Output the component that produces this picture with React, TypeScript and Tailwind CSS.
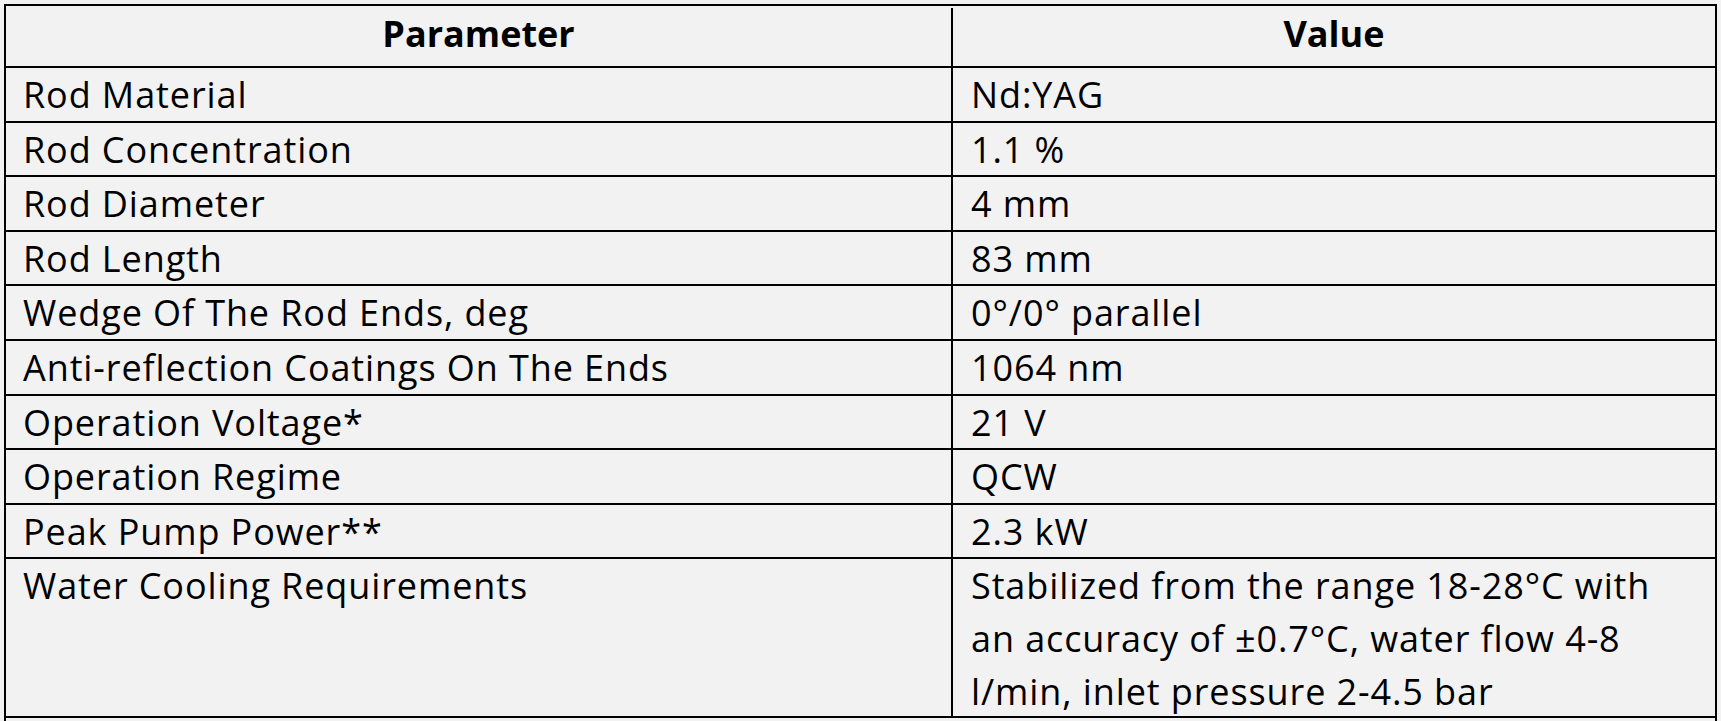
const rows: [string, string][] = [
  ['Rod Material', 'Nd:YAG'],
  ['Rod Concentration', '1.1 %'],
  ['Rod Diameter', '4 mm'],
  ['Rod Length', '83 mm'],
  ['Wedge Of The Rod Ends, deg', '0°/0° parallel'],
  ['Anti-reflection Coatings On The Ends', '1064 nm'],
  ['Operation Voltage*', '21 V'],
  ['Operation Regime', 'QCW'],
  ['Peak Pump Power**', '2.3 kW'],
];

export default function App() {
  return (
    <div className="min-h-screen bg-[#f2f2f2] pt-[4px] pl-[4px] font-['Open_Sans',sans-serif] text-[36px] leading-[52.7px] tracking-[0.025em] text-black">
      <div className="flex w-[1713px] flex-col border-2 border-black">
        {/* header */}
        <div className="flex h-[62px] border-b-2 border-black pt-[2px] font-bold tracking-normal">
          <div className="w-[947px] shrink-0 border-r-2 border-black text-center">Parameter</div>
          <div className="flex-1 text-center">Value</div>
        </div>

        {rows.map(([name, value]) => (
          <div key={name} className="flex h-[54.6px] border-b-2 border-black">
            <div className="w-[947px] shrink-0 border-r-2 border-black pl-[17px]">
              <div className="mt-[1px] whitespace-nowrap">{name}</div>
            </div>
            <div className="flex-1 pl-[18px]">
              <div className="mt-[1px] whitespace-nowrap">{value}</div>
            </div>
          </div>
        ))}

        <div className="flex h-[158.3px] border-b-2 border-black">
          <div className="w-[947px] shrink-0 border-r-2 border-black pl-[17px]">
            <div className="mt-[1px] whitespace-nowrap">Water Cooling Requirements</div>
          </div>
          <div className="flex-1 pl-[18px]">
            <div className="mt-[1px] whitespace-nowrap">
              Stabilized from the range 18-28°C with
              <br />
              an accuracy of ±0.7°C, water flow 4-8
              <br />
              l/min, inlet pressure 2-4.5 bar
            </div>
          </div>
        </div>

        {/* footnotes row, cut off by the window */}
        <div className="h-[60px]" />
      </div>
    </div>
  );
}
